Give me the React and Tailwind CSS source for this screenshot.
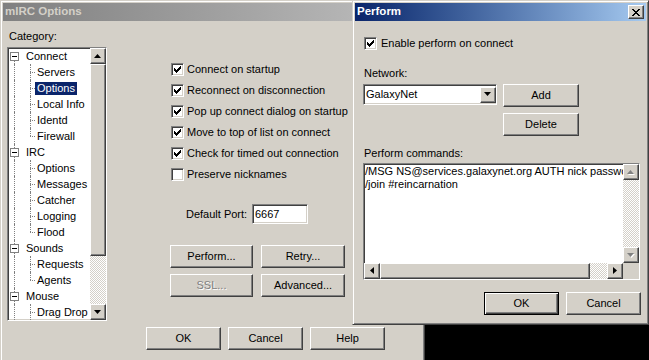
import React from 'react';

const raised =
  'bg-[#d4d0c8] border border-t-white border-l-white border-r-[#404040] border-b-[#404040] shadow-[inset_-1px_-1px_#808080]';
const defRaised =
  'bg-[#d4d0c8] border border-black shadow-[inset_1px_1px_#fff,inset_-1px_-1px_#404040,inset_-2px_-2px_#808080]';
const sunken =
  'border border-t-[#808080] border-l-[#808080] border-r-white border-b-white shadow-[inset_1px_1px_#404040,inset_-1px_-1px_#d4d0c8]';
const frame =
  'bg-[#d4d0c8] border border-t-[#d4d0c8] border-l-[#d4d0c8] border-r-[#404040] border-b-[#404040] shadow-[inset_1px_1px_#fff,inset_-1px_-1px_#808080] p-[2px]';
const dither = '[background:repeating-conic-gradient(#fff_0_25%,#d4d0c8_0_50%)_0_0/2px_2px]';

const CheckMark = () => (
  <svg width="7" height="7" shapeRendering="crispEdges">
    <rect x="6" y="0" width="1" height="1" />
    <rect x="5" y="1" width="2" height="1" />
    <rect x="0" y="2" width="1" height="1" />
    <rect x="4" y="2" width="3" height="1" />
    <rect x="0" y="3" width="2" height="1" />
    <rect x="3" y="3" width="3" height="1" />
    <rect x="0" y="4" width="5" height="1" />
    <rect x="1" y="5" width="3" height="1" />
    <rect x="2" y="6" width="1" height="1" />
  </svg>
);

const Check = ({ checked }) => (
  <span className={`${sunken} bg-white w-[13px] h-[13px] flex items-center justify-center shrink-0`}>
    {checked && <CheckMark />}
  </span>
);

const Btn = ({ children, className = '', disabled, def }) => (
  <button type="button" className={`${def ? defRaised : raised} flex items-center justify-center ${className}`}>
    <span className={disabled ? 'text-[#808080] [text-shadow:1px_1px_#fff]' : ''}>{children}</span>
  </button>
);

// small scroll arrows, dir: up | down | left | right
const Arrow = ({ dir, disabled }) => {
  const pts = {
    up: '3.5,0 7,4 0,4',
    down: '0,0 7,0 3.5,4',
    left: '4,0 4,7 0,3.5',
    right: '0,0 4,3.5 0,7',
  }[dir];
  const vert = dir === 'up' || dir === 'down';
  const w = vert ? 7 : 4;
  const h = vert ? 4 : 7;
  return (
    <svg width={w + 1} height={h + 1} viewBox={`0 0 ${w + 1} ${h + 1}`}>
      {disabled && <polygon points={pts} fill="#fff" transform="translate(1,1)" />}
      <polygon points={pts} fill={disabled ? '#808080' : '#000'} />
    </svg>
  );
};

const ScrollBtn = ({ dir, disabled }) => (
  <div className={`${raised} w-4 h-4 shrink-0 flex items-center justify-center`}>
    <Arrow dir={dir} disabled={disabled} />
  </div>
);

// [label, children, list continues below the visible part]
const tree = [
  ['Connect', ['Servers', 'Options', 'Local Info', 'Identd', 'Firewall']],
  ['IRC', ['Options', 'Messages', 'Catcher', 'Logging', 'Flood']],
  ['Sounds', ['Requests', 'Agents']],
  ['Mouse', ['Drag Drop'], true],
];

const dotV = 'absolute border-l border-dotted border-[#808080]';

const Tree = () => (
  <div className={`${sunken} bg-white h-[274px] flex`}>
    <div className="flex-1 overflow-hidden">
      {tree.map(([root, kids, more], ri) => (
        <React.Fragment key={root}>
          <div className="flex h-4 items-center">
            <span className="relative h-full w-[16px] shrink-0">
              <span className={`${dotV} left-[6px] ${ri === 0 ? 'top-[8px]' : 'top-0'} bottom-0`} />
              <span className="absolute left-[2px] top-[4px] w-[9px] h-[9px] border border-[#808080] bg-white flex items-center justify-center">
                <span className="w-[5px] h-px bg-black" />
              </span>
            </span>
            <span className="px-[2px] leading-[13px]">{root}</span>
          </div>
          {kids.map((k, ki) => {
            const last = ki === kids.length - 1 && !more;
            const sel = ri === 0 && ki === 1;
            return (
              <div key={k} className="flex h-4 items-center">
                <span className="relative h-full w-[27px] shrink-0">
                  <span className={`${dotV} left-[6px] top-0 bottom-0`} />
                  <span className={`${dotV} left-[22px] top-0 ${last ? 'h-[8px]' : 'bottom-0'}`} />
                  <span className="absolute left-[22px] top-[8px] w-[5px] border-t border-dotted border-[#808080]" />
                </span>
                <span className={`px-[2px] h-[13px] leading-[13px] ${sel ? 'bg-[#0a246a] text-white' : ''}`}>{k}</span>
              </div>
            );
          })}
        </React.Fragment>
      ))}
    </div>
    <div className="w-4 flex flex-col shrink-0">
      <ScrollBtn dir="up" />
      <div className={`${raised} h-[192px] shrink-0`} />
      <div className={`flex-1 ${dither}`} />
      <ScrollBtn dir="down" />
    </div>
  </div>
);

const options = [
  ['Connect on startup', true],
  ['Reconnect on disconnection', true],
  ['Pop up connect dialog on startup', true],
  ['Move to top of list on connect', true],
  ['Check for timed out connection', true],
  ['Preserve nicknames', false],
];

const CloseX = () => (
  <svg width="8" height="7" shapeRendering="crispEdges">
    <rect x="0" y="0" width="2" height="1" />
    <rect x="6" y="0" width="2" height="1" />
    <rect x="1" y="1" width="2" height="1" />
    <rect x="5" y="1" width="2" height="1" />
    <rect x="2" y="2" width="4" height="1" />
    <rect x="3" y="3" width="2" height="1" />
    <rect x="2" y="4" width="4" height="1" />
    <rect x="1" y="5" width="2" height="1" />
    <rect x="5" y="5" width="2" height="1" />
    <rect x="0" y="6" width="2" height="1" />
    <rect x="6" y="6" width="2" height="1" />
  </svg>
);

const OptionsWindow = () => (
  <div className={`absolute left-0 top-0 w-[425px] h-[380px] ${frame} flex flex-col`}>
    <div className="h-[18px] bg-linear-to-r from-[#808080] to-[#c0c0c0] flex items-center pl-[2px] shrink-0">
      <span className="font-bold text-[11.5px] text-[#d4d0c8]">mIRC Options</span>
    </div>
    <div className="flex">
      <div className="ml-[4px] w-[100px] shrink-0">
        <div className="pl-[2px] mt-[9px] leading-[13px]">Category:</div>
        <div className="mt-[4px]">
          <Tree />
        </div>
      </div>
      <div className="ml-[63px] flex flex-col">
        <div className="mt-[42px] ml-[1px] flex flex-col gap-[8px]">
          {options.map(([label, on]) => (
            <div key={label} className="flex items-center gap-[3px] h-[13px]">
              <Check checked={on} />
              <span className="leading-[13px]">{label}</span>
            </div>
          ))}
        </div>
        <div className="mt-[23px] ml-[16px] flex items-center h-[20px]">
          <span className="w-[66px]">Default Port:</span>
          <div className={`${sunken} bg-white w-[56px] h-[20px] flex items-center pl-[2px]`}>6667</div>
        </div>
        <div className="mt-[21px] grid grid-cols-[83px_84px] gap-x-[8px] gap-y-[6px]">
          <Btn className="h-[23px]">Perform...</Btn>
          <Btn className="h-[23px]">Retry...</Btn>
          <Btn className="h-[23px]" disabled>SSL...</Btn>
          <Btn className="h-[23px]">Advanced...</Btn>
        </div>
      </div>
    </div>
    <div className="mt-[6px] ml-[143px] flex gap-[7px]">
      <Btn className="w-[75px] h-[23px]">OK</Btn>
      <Btn className="w-[75px] h-[23px]">Cancel</Btn>
      <Btn className="w-[75px] h-[23px]">Help</Btn>
    </div>
  </div>
);

const PerformWindow = () => (
  <div className={`absolute left-[352px] top-0 w-[297px] h-[325px] ${frame} flex flex-col`}>
    <div className="h-[18px] bg-linear-to-r from-[#0a246a] to-[#a6caf0] flex items-center pl-[2px] pr-[2px] shrink-0">
      <span className="font-bold text-[11.5px] text-white">Perform</span>
      <div className={`${raised} ml-auto w-[16px] h-[14px] flex items-center justify-center`}>
        <CloseX />
      </div>
    </div>
    <div className="mt-[16px] ml-[9px] flex items-center gap-[4px] h-[13px]">
      <Check checked />
      <span className="leading-[13px]">Enable perform on connect</span>
    </div>
    <div className="mt-[17px] ml-[9px] leading-[13px]">Network:</div>
    <div className="mt-[4px] ml-[8px] flex gap-[6px] items-start">
      <div className={`${sunken} bg-white w-[134px] h-[21px] flex items-center pl-[2px]`}>
        <span className="flex-1">GalaxyNet</span>
        <ScrollBtn dir="down" />
      </div>
      <div className="flex flex-col gap-[6px]">
        <Btn className="w-[76px] h-[23px]">Add</Btn>
        <Btn className="w-[76px] h-[23px]">Delete</Btn>
      </div>
    </div>
    <div className="mt-[11px] ml-[9px] leading-[13px]">Perform commands:</div>
    <div className={`mt-[3px] ml-[8px] w-[277px] h-[117px] ${sunken} bg-white flex flex-col`}>
      <div className="flex flex-1 min-h-0">
        <div className="flex-1 overflow-hidden pl-[1px] pt-[1px] leading-[13px] whitespace-nowrap">
          <div>/MSG NS@services.galaxynet.org AUTH nick password</div>
          <div>/join #reincarnation</div>
        </div>
        <div className="w-4 flex flex-col shrink-0">
          <ScrollBtn dir="up" disabled />
          <div className={`flex-1 ${dither}`} />
          <ScrollBtn dir="down" disabled />
        </div>
      </div>
      <div className="flex h-4 shrink-0">
        <ScrollBtn dir="left" />
        <div className={`${raised} w-[210px] shrink-0`} />
        <div className={`flex-1 ${dither}`} />
        <ScrollBtn dir="right" />
        <div className="w-4 bg-[#d4d0c8]" />
      </div>
    </div>
    <div className="mt-[12px] mr-[5px] flex justify-end gap-[7px]">
      <Btn def className="w-[75px] h-[23px]">OK</Btn>
      <Btn className="w-[75px] h-[23px]">Cancel</Btn>
    </div>
  </div>
);

export default function App() {
  return (
    <div className="relative w-[649px] h-[360px] overflow-hidden bg-black text-black text-[11px] font-['Liberation_Sans',Arial,sans-serif]">
      <OptionsWindow />
      <PerformWindow />
    </div>
  );
}
